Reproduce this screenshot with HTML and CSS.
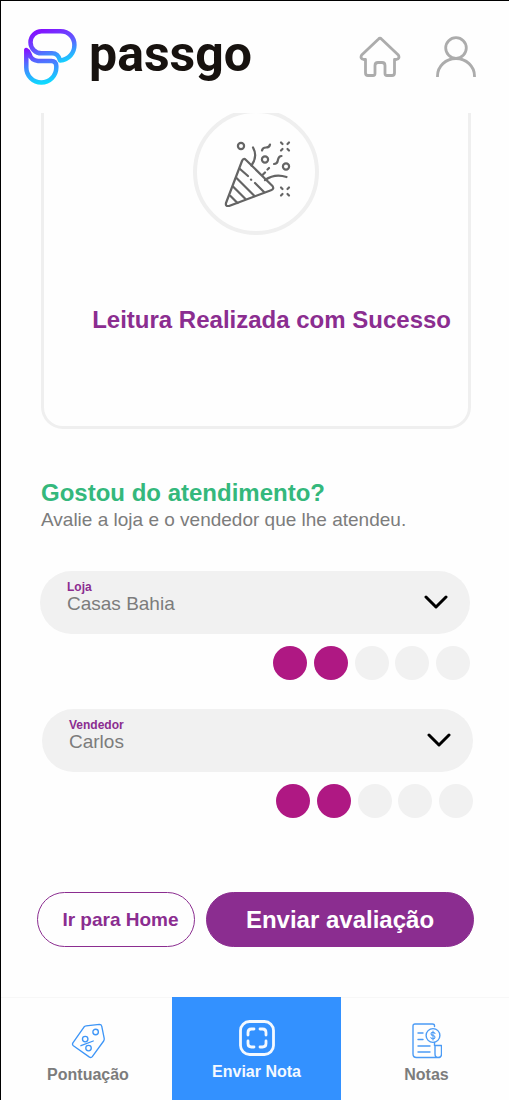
FILE: index.html
```html
<!DOCTYPE html>
<html lang="pt-BR">
<head>
<meta charset="utf-8">
<meta name="viewport" content="width=device-width, initial-scale=1">
<title>Passgo</title>
<link rel="stylesheet" href="styles.css">
</head>
<body>
<header class="header">
  <a class="brand" href="#">
    <svg class="brand-mark" viewBox="0 0 54 58" fill="none" stroke-width="4.500" stroke-linejoin="round" aria-hidden="true">
      <defs>
        <linearGradient id="g1" gradientUnits="userSpaceOnUse" x1="22" y1="1" x2="34" y2="36"><stop offset="0" stop-color="#8412ff"/><stop offset=".5" stop-color="#5f5cff"/><stop offset="1" stop-color="#16d0ff"/></linearGradient>
        <linearGradient id="g2" gradientUnits="userSpaceOnUse" x1="12" y1="20" x2="18" y2="56"><stop offset="0" stop-color="#8412ff"/><stop offset=".45" stop-color="#4a7cff"/><stop offset="1" stop-color="#0cdcff"/></linearGradient>
      </defs>
      <path stroke="url(#g1)" d="M18.500 3.300H37.500C46 3.300 51.400 9.500 51.400 17C51.400 25 46 31.500 37 32.500C36 28.500 34 25.300 29 25.300H18.500A11 11 0 0 1 18.500 3.300Z"/>
      <path stroke="url(#g2)" d="M3.300 22V39.500A15 15 0 0 0 33.300 39.500V38Q33 33 28.500 33H15C9.500 32.500 7.500 29.500 6.500 26Q5.500 23 3.300 22Z"/>
    </svg>
    <span class="brand-name">passgo</span>
  </a>
  <nav class="header-actions" aria-label="Atalhos">
    <a href="#" aria-label="Início"><svg class="action-icon" viewBox="0 0 42 42" fill="none" stroke="#acacac" stroke-width="2.800" stroke-linejoin="round" aria-hidden="true"><path d="M19.300 3.200Q21 1.500 22.700 3.200L39.300 19q2 3.500-2 4.500H35.500V37q0 2.500-2.500 2.500H28q-2 0-2-2V29.500q0-3-3-3H19q-3 0-3 3v8q0 2-2 2H9q-2.500 0-2.500-2.500V23.500H4.700q-4-1-2-4.500Z"/></svg></a>
    <a href="#" aria-label="Perfil"><svg class="action-icon" viewBox="0 0 42 42" fill="none" stroke="#acacac" stroke-width="2.800" aria-hidden="true"><circle cx="21" cy="12" r="10.300"/><path d="M2.500 41v-1a18.500 17.500 0 0 1 37 0v1"/></svg></a>
  </nav>
</header>

<main class="content">
  <section class="card">
    <div class="badge">
      <svg class="party" viewBox="0 0 70 70" fill="none" stroke="#646464" stroke-width="2.200" stroke-linecap="round" stroke-linejoin="round" aria-hidden="true">
        <path d="M18 24q1.500-3.500 4-1L48.500 49q2 3-1.500 4.200L5 69q-3.800.6-3-3Z"/>
        <path d="M16 32l8 7M31 46l9 9M12.500 41l18 18M9.500 50l12 12M6.500 59l7 7M27 42.600l.2.200"/>
        <path d="M29 10.500q5 9-1.500 18M41 43q10-7 21.500-3M38.500 38l2.500-2.500M43.500 32.500l1.500-1.500M38 13.500c.5-3 2.500-3 4-3s3.500 0 4-3M50 27c4 0 3.500-2.500 4-4.500s1-3.500 3.500-3.500"/>
        <circle cx="17" cy="9" r="3.100"/><circle cx="41" cy="22.500" r="3.100"/><circle cx="62" cy="29.500" r="3.100"/>
        <path d="M57 5.500l1.500 1.500M65 5.500l-1.500 1.500M57 13.500l1.500-1.500M65 13.500l-1.500-1.500M57 50.500l1.500 1.500M65 50.500l-1.500 1.500M57 58.500l1.500-1.500M65 58.500l-1.500-1.500"/>
      </svg>
    </div>
    <h1 class="card-title">Leitura Realizada com Sucesso</h1>
  </section>

  <form class="review">
    <h2 class="review-title">Gostou do atendimento?</h2>
    <p class="review-text">Avalie a loja e o vendedor que lhe atendeu.</p>

    <div class="group">
      <div class="field">
        <label class="field-label" for="loja">Loja</label>
        <select class="field-select" id="loja"><option>Casas Bahia</option></select>
        <svg class="chevron" viewBox="0 0 24 14" fill="none" stroke="#000" stroke-width="3" stroke-linecap="round" stroke-linejoin="round" aria-hidden="true"><path d="M2 2l10 10L22 2"/></svg>
      </div>
      <div class="rating" role="radiogroup" aria-label="Nota da loja">
        <input class="dot filled" type="radio" name="nota-loja" aria-label="1">
        <input class="dot filled" type="radio" name="nota-loja" aria-label="2" checked>
        <input class="dot" type="radio" name="nota-loja" aria-label="3">
        <input class="dot" type="radio" name="nota-loja" aria-label="4">
        <input class="dot" type="radio" name="nota-loja" aria-label="5">
      </div>
    </div>

    <div class="group group-seller">
      <div class="field">
        <label class="field-label" for="vendedor">Vendedor</label>
        <select class="field-select" id="vendedor"><option>Carlos</option></select>
        <svg class="chevron" viewBox="0 0 24 14" fill="none" stroke="#000" stroke-width="3" stroke-linecap="round" stroke-linejoin="round" aria-hidden="true"><path d="M2 2l10 10L22 2"/></svg>
      </div>
      <div class="rating" role="radiogroup" aria-label="Nota do vendedor">
        <input class="dot filled" type="radio" name="nota-vendedor" aria-label="1">
        <input class="dot filled" type="radio" name="nota-vendedor" aria-label="2" checked>
        <input class="dot" type="radio" name="nota-vendedor" aria-label="3">
        <input class="dot" type="radio" name="nota-vendedor" aria-label="4">
        <input class="dot" type="radio" name="nota-vendedor" aria-label="5">
      </div>
    </div>

    <div class="buttons">
      <button class="btn btn-outline" type="button">Ir para Home</button>
      <button class="btn btn-solid" type="submit">Enviar avaliação</button>
    </div>
  </form>
</main>

<nav class="tabs" aria-label="Principal">
  <a class="tab" href="#">
    <svg class="tab-icon" viewBox="0 0 36 38" fill="none" stroke="#3d95f7" stroke-width="1.400" stroke-linejoin="round" stroke-linecap="round" aria-hidden="true"><path d="M16 3L30 1.500q2 0 2.500 2L35 16q.3 1.500-.5 3L22.500 35.500q-1.200 1.500-3 .5L2.500 24q-1.500-1.200-.5-3L13.500 4.500Q14.500 3.200 16 3Z"/><circle cx="26" cy="9.500" r="2.900"/><circle cx="15" cy="17" r="2.900"/><circle cx="18.500" cy="26.500" r="2.900"/><path d="M10.500 24l13-5"/></svg>
    <span>Pontuação</span>
  </a>
  <a class="tab tab-active" href="#" aria-current="page">
    <svg class="tab-icon" viewBox="0 0 36 36" fill="none" stroke="#f4f9ff" stroke-width="2.800" stroke-linecap="round" aria-hidden="true"><rect x="1.500" y="1.500" width="33" height="33" rx="9"/><path d="M9 15v-2.500Q9 9 12.500 9H15M21 9h2.500Q27 9 27 12.500V15M27 21v2.500q0 3.500-3.500 3.500H21M15 27h-2.500Q9 27 9 23.500V21"/></svg>
    <span>Enviar Nota</span>
  </a>
  <a class="tab" href="#">
    <svg class="tab-icon" viewBox="0 0 30 36" fill="none" stroke="#4b9bf5" stroke-width="1.400" stroke-linecap="round" stroke-linejoin="round" aria-hidden="true"><path d="M22.500 3.500v-1q0-1.500-2-1.500H3Q1 1 1 3v28q0 3.500 3.500 3.500H26q3.500 0 3.500-3.500v-8.500h-6.500V31q0 3.500 3 3.500M22.500 19.500v3M6 10h5M6 16.500h5M6 23h12M6 29h12"/><circle cx="21" cy="12.500" r="6.900"/><path d="M23 10.500q-.5-1.300-2-1.300-2 0-2 1.600t2 1.700q2 .2 2 1.700t-2 1.700q-1.600 0-2.100-1.300M21 8v9" stroke-width="1.100"/></svg>
    <span>Notas</span>
  </a>
</nav>
</body>
</html>
```
FILE: styles.css
```css
* { box-sizing: border-box; }

body {
  margin: 0;
  min-height: 100vh;
  display: flex;
  flex-direction: column;
  border: solid #000;
  border-width: 1px 0 0 1px;
  background: #fefefe;
  font-family: "Liberation Sans", Arial, sans-serif;
  color: #7c7c7c;
}

a { color: inherit; text-decoration: none; }
h1, h2, p { margin: 0; }

.header {
  position: relative;
  z-index: 1;
  display: flex;
  align-items: center;
  justify-content: space-between;
  height: 112px;
  padding: 0 32px 0 22px;
  background: #fefefe;
}
.brand { display: flex; align-items: center; gap: 12px; }
.brand-mark { width: 54px; height: 58px; }
.brand-name {
  padding-bottom: 6px;
  font-family: Roboto, sans-serif;
  font-size: 50px;
  line-height: 56px;
  font-weight: 700;
  color: #17120f;
}
.header-actions { display: flex; gap: 34px; }
.action-icon { display: block; width: 42px; height: 42px; }

.content { flex: 1; padding: 0 35px 0 40px; }

.card {
  height: 340px;
  margin: -24px 3px 0 0;
  padding-top: 17px;
  border: 3px solid #efefef;
  border-radius: 22px;
}
.badge {
  display: grid;
  place-items: center;
  width: 126px;
  height: 126px;
  margin: 0 auto;
  padding-left: 5px;
  border: 4px solid #efefef;
  border-radius: 50%;
}
.party { width: 70px; height: 70px; }
.card-title {
  margin: 69px 17px 0 0;
  font-size: 24px;
  line-height: 31px;
  text-align: right;
  white-space: nowrap;
  color: #8b2d90;
}

.review { padding-top: 48px; }
.review-title { font-size: 24px; line-height: 31px; color: #34b87c; }
.review-text { font-size: 19px; line-height: 24px; }

.group { margin: 39px 4px 0 -1px; }
.group-seller { margin: 29px 1px 0 1px; }
.field {
  position: relative;
  height: 63px;
  padding: 10px 0 0 27px;
  border-radius: 32px;
  background: #f1f1f1;
}
.field-label {
  display: block;
  font-size: 12px;
  line-height: 12px;
  font-weight: 700;
  color: #8b2d90;
}
.field-select {
  display: block;
  appearance: none;
  width: 100%;
  height: 22px;
  padding: 0;
  border: 0;
  background: transparent;
  font: 19px/22px "Liberation Sans", Arial, sans-serif;
  color: #7c7c7c;
}
.chevron {
  position: absolute;
  right: 22px;
  top: 24px;
  width: 24px;
  height: 14px;
  pointer-events: none;
}
.rating {
  display: flex;
  justify-content: space-between;
  width: 197px;
  margin: 12px 0 0 auto;
}
.dot {
  appearance: none;
  width: 34px;
  height: 34px;
  margin: 0;
  border-radius: 50%;
  background: #f1f1f1;
}
.dot.filled { background: #af1883; }

.buttons {
  display: grid;
  grid-template-columns: 158fr 268fr;
  gap: 11px;
  margin: 74px 0 0 -4px;
}
.btn {
  height: 55px;
  border: 1px solid #8b2d90;
  border-radius: 28px;
  font-family: inherit;
  font-weight: 700;
}
.btn-outline { padding: 0 0 0 9px; background: #fefefe; color: #8b2d90; font-size: 19px; }
.btn-solid { padding: 0; background: #8b2d90; color: #fff; font-size: 24px; }

.tabs {
  display: grid;
  grid-template-columns: 171fr 169fr 168fr;
  height: 103px;
}
.tab {
  display: flex;
  flex-direction: column;
  align-items: center;
  justify-content: flex-end;
  gap: 6px;
  padding: 0 0 15px 3px;
  border-top: 1px solid #f7f7f7;
  font-size: 16px;
  line-height: 20px;
  font-weight: 700;
}
.tab-active { padding: 0 0 18px; border-color: #3391ff; background: #3391ff; color: #f4f9ff; }
.tab-icon { height: 36px; }
```
